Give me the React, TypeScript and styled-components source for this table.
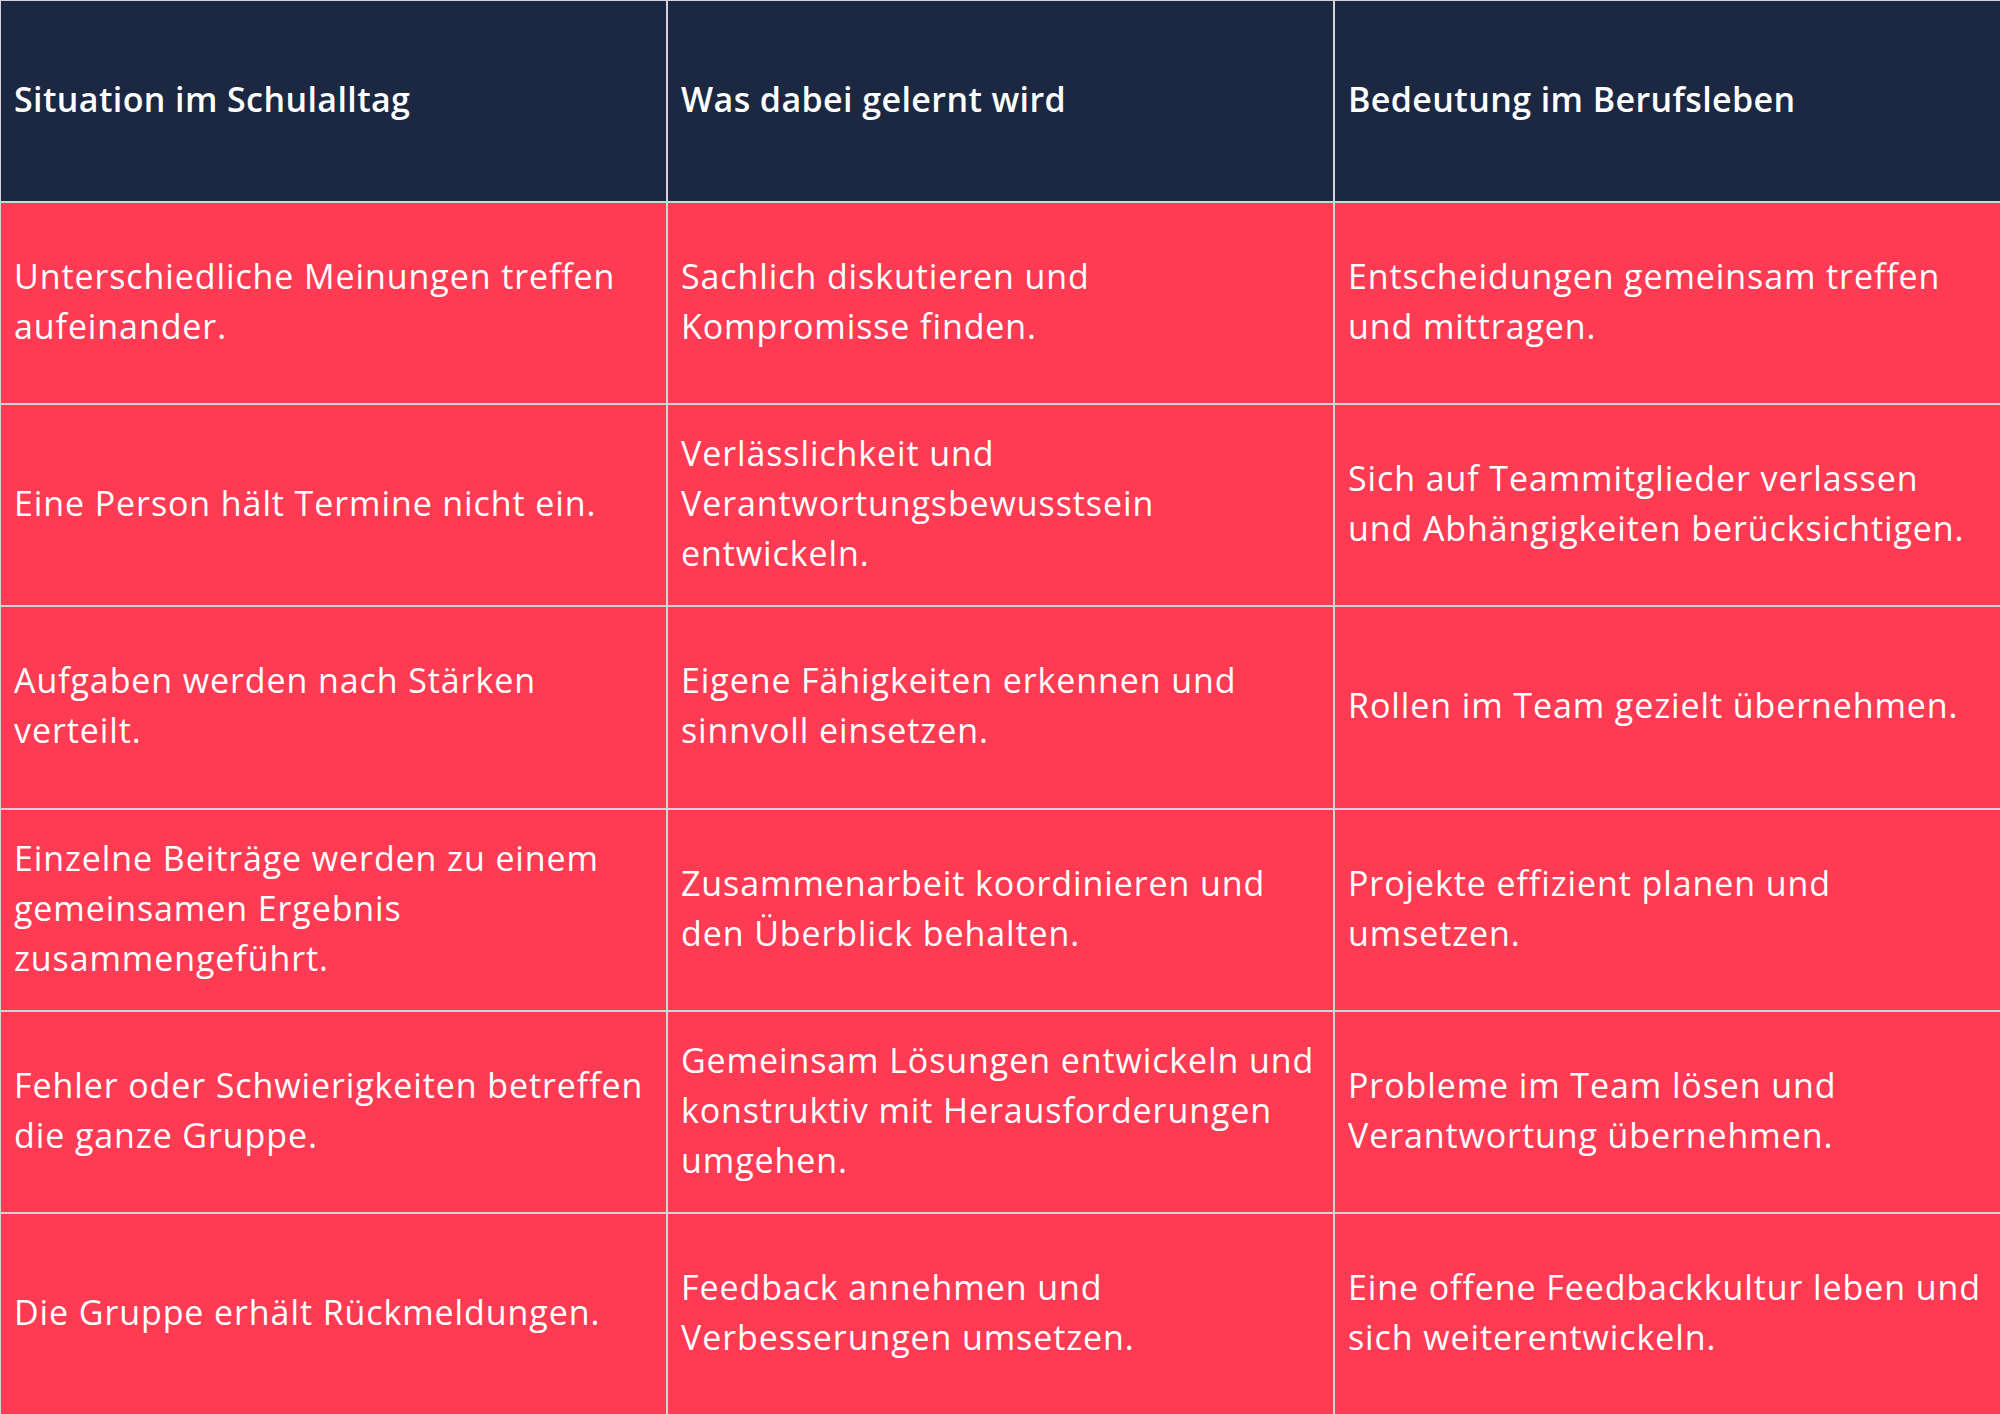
import styled, { createGlobalStyle } from "styled-components";

const GlobalStyle = createGlobalStyle`
  html, body {
    margin: 0;
    padding: 0;
    background: #ffffff;
  }
`;

const Table = styled.div`
  box-sizing: border-box;
  width: 2000px;
  height: 1414px;
  display: grid;
  grid-template-columns: repeat(3, 1fr);
  grid-template-rows: repeat(7, 1fr);
  gap: 2px;
  padding: 1px 0 0 1px;
  background: #d3d3d6;
  font-family: "Open Sans", "Liberation Sans", sans-serif;
  color: #ffffff;
`;

const Cell = styled.div<{ $head?: boolean }>`
  display: flex;
  flex-direction: column;
  justify-content: center;
  padding: 0 0 4px 13px;
  background: ${(p) => (p.$head ? "#1c2742" : "#ff3a53")};
  font-size: 34px;
  font-weight: ${(p) => (p.$head ? 600 : 400)};
  line-height: 50px;
  letter-spacing: ${(p) => (p.$head ? "0.4px" : "0.9px")};
`;

const Line = styled.span`
  white-space: nowrap;
`;

const head = [
  "Situation im Schulalltag",
  "Was dabei gelernt wird",
  "Bedeutung im Berufsleben",
];

const rows: string[][][] = [
  [
    ["Unterschiedliche Meinungen treffen", "aufeinander."],
    ["Sachlich diskutieren und", "Kompromisse finden."],
    ["Entscheidungen gemeinsam treffen", "und mittragen."],
  ],
  [
    ["Eine Person hält Termine nicht ein."],
    ["Verlässlichkeit und", "Verantwortungsbewusstsein", "entwickeln."],
    ["Sich auf Teammitglieder verlassen", "und Abhängigkeiten berücksichtigen."],
  ],
  [
    ["Aufgaben werden nach Stärken", "verteilt."],
    ["Eigene Fähigkeiten erkennen und", "sinnvoll einsetzen."],
    ["Rollen im Team gezielt übernehmen."],
  ],
  [
    ["Einzelne Beiträge werden zu einem", "gemeinsamen Ergebnis", "zusammengeführt."],
    ["Zusammenarbeit koordinieren und", "den Überblick behalten."],
    ["Projekte effizient planen und", "umsetzen."],
  ],
  [
    ["Fehler oder Schwierigkeiten betreffen", "die ganze Gruppe."],
    ["Gemeinsam Lösungen entwickeln und", "konstruktiv mit Herausforderungen", "umgehen."],
    ["Probleme im Team lösen und", "Verantwortung übernehmen."],
  ],
  [
    ["Die Gruppe erhält Rückmeldungen."],
    ["Feedback annehmen und", "Verbesserungen umsetzen."],
    ["Eine offene Feedbackkultur leben und", "sich weiterentwickeln."],
  ],
];

export default function App() {
  return (
    <>
      <GlobalStyle />
      <Table>
        {head.map((h) => (
          <Cell $head key={h}>
            <Line>{h}</Line>
          </Cell>
        ))}
        {rows.map((row, i) =>
          row.map((cell, j) => (
            <Cell key={`${i}-${j}`}>
              {cell.map((l) => (
                <Line key={l}>{l}</Line>
              ))}
            </Cell>
          ))
        )}
      </Table>
    </>
  );
}
